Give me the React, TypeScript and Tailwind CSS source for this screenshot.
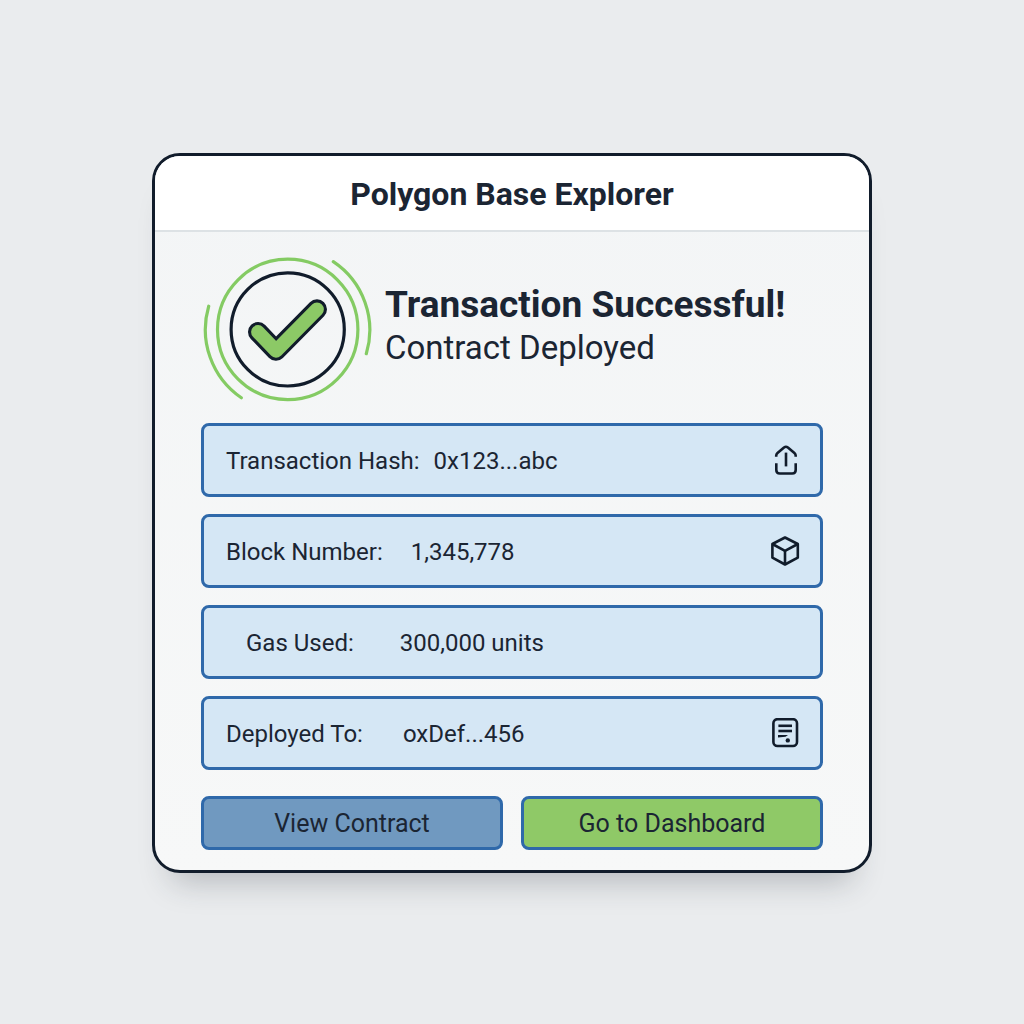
import React from "react";

const ShareIcon = () => (
  <svg viewBox="0 0 30 30" className="h-[30px] w-[30px]" fill="none" stroke="#111c2b" strokeWidth="2.6" strokeLinejoin="round" aria-hidden="true">
    <path d="M6.2 11.8V10.8C6.2 9.6 6.6 8.8 7.5 8L14 2.5C15.2 1.6 16.7 1.6 17.9 2.5L24.4 8C25.3 8.8 25.7 9.6 25.7 10.8V11.8" />
    <path d="M16 7.6V21.4" />
    <path d="M6.3 18.2V25C6.3 27.2 7.6 28.5 9.8 28.5H22.2C24.4 28.5 25.7 27.2 25.7 25V18.2" />
  </svg>
);

const BlockIcon = () => (
  <svg viewBox="0 0 30 30" className="h-[30px] w-[30px]" fill="none" stroke="#111c2b" strokeWidth="2.6" strokeLinejoin="round" aria-hidden="true">
    <path d="M15 1.5L27.8 8V21.6L15 28.5L2.4 21.6V8Z" />
    <path d="M2.4 8L15 14.8L27.8 8" />
    <path d="M15 14.8V28.5" />
  </svg>
);

const ContractIcon = () => (
  <svg viewBox="0 0 30 30" className="h-[30px] w-[30px]" fill="none" stroke="#111c2b" strokeWidth="2.6" aria-hidden="true">
    <rect x="3.4" y="1.2" width="23.6" height="26.8" rx="4" />
    <path d="M8.4 7.8H22" />
    <path d="M8.4 13H22" />
    <path d="M8 16.9L18 17.1L15.5 18.7L8 19.5Z" fill="#111c2b" stroke="none" />
    <circle cx="17.8" cy="22.4" r="2.2" fill="#111c2b" stroke="none" />
  </svg>
);

const SuccessMark = () => (
  <svg viewBox="0 0 174 174" className="h-[174px] w-[174px] shrink-0" fill="none" strokeLinecap="round" strokeLinejoin="round" aria-hidden="true">
    {/* green rings */}
    <g stroke="#84cb63" strokeWidth="3.2">
      <circle cx="86.7" cy="87.4" r="70.2" />
      <path d="M132.3 19.7A82.2 82.2 0 0 1 165.3 111.7" />
      <path d="M7.7 64.2A82.8 82.8 0 0 0 40.3 155.8" />
    </g>
    <circle cx="86.7" cy="87.4" r="56.6" stroke="#111c2b" strokeWidth="3.2" />
    {/* tick, dark outline under green fill */}
    <path d="M57 90L75 108.8L116 67.3" stroke="#111c2b" strokeWidth="20" />
    <path d="M57 90L75 108.8L116 67.3" stroke="#8cc966" strokeWidth="13.8" />
  </svg>
);

const details = [
  { label: "Transaction Hash:", value: "0x123...abc", spacing: "gap-[14px]", icon: <ShareIcon /> },
  { label: "Block Number:", value: "1,345,778", spacing: "gap-7", icon: <BlockIcon /> },
  { label: "Gas Used:", value: "300,000 units", spacing: "gap-[46px] pl-5", icon: null },
  { label: "Deployed To:", value: "oxDef...456", spacing: "gap-10", icon: <ContractIcon /> },
];

const App = () => {
  return (
    <main className="flex min-h-screen items-center justify-center bg-[#eaecee] pt-0.5 font-['Roboto',sans-serif] text-[#1b2533]">
      <section className="w-full max-w-[720px] overflow-hidden rounded-[28px] border-3 border-[#111c2b] bg-linear-to-b from-[#f3f5f6] to-[#f7f8f8] shadow-[0_28px_32px_-20px_rgba(40,48,56,0.28)]">
        <header className="flex h-[76px] items-center justify-center border-b-2 border-[#dde2e5] bg-white pt-0.5">
          <h1 className="text-[32px] leading-10 font-bold">Polygon Base Explorer</h1>
        </header>

        <div className="px-[46px] pt-[10px] pb-5">
          <div className="flex items-center gap-[10px]">
            <SuccessMark />
            <div className="pb-1.5">
              <h2 className="text-[37px] leading-[44px] font-bold">Transaction Successful!</h2>
              <p className="text-[33px] leading-[42px]">Contract Deployed</p>
            </div>
          </div>

          <dl className="mt-[7px] flex flex-col gap-[17px]">
            {details.map((row) => (
              <div
                key={row.label}
                className="flex h-[74px] items-center justify-between rounded-lg border-3 border-[#2f69aa] bg-[#d5e7f5] pr-5 pl-[22px] text-2xl"
              >
                <div className={`flex pt-0.5 ${row.spacing}`}>
                  <dt>{row.label}</dt>
                  <dd>{row.value}</dd>
                </div>
                {row.icon}
              </div>
            ))}
          </dl>

          <div className="mt-[26px] grid grid-cols-2 gap-[18px] text-[25px] leading-8">
            <button type="button" className="h-[54px] rounded-lg border-3 border-[#2f69aa] bg-[#7099c0] pt-0.5">
              View Contract
            </button>
            <button type="button" className="h-[54px] rounded-lg border-3 border-[#2f69aa] bg-[#8fc967] pt-0.5">
              Go to Dashboard
            </button>
          </div>
        </div>
      </section>
    </main>
  );
};

export default App;
